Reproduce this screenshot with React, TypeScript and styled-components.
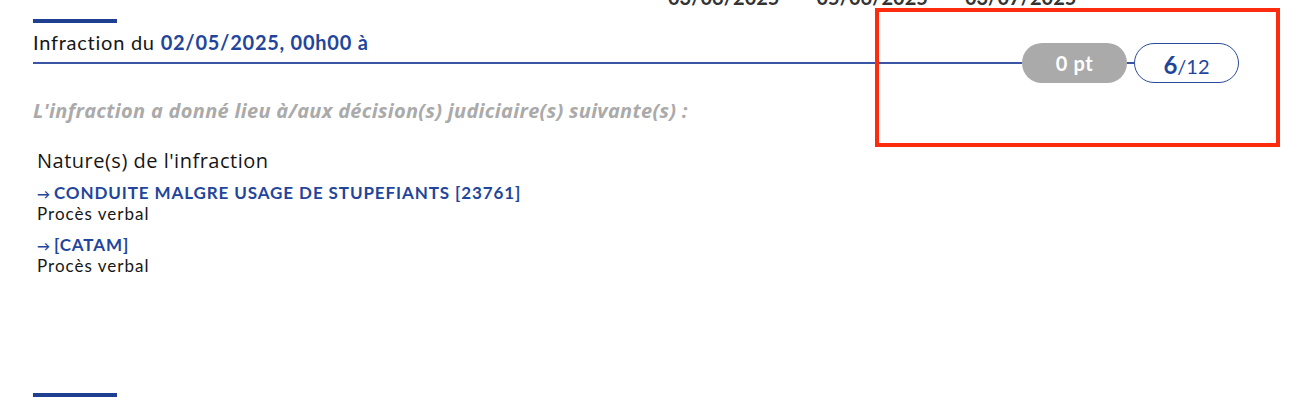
import React from "react";
import styled, { createGlobalStyle } from "styled-components";

const Global = createGlobalStyle`
  html, body { margin: 0; padding: 0; background: #ffffff; }
  body { font-family: Lato, "Noto Sans", sans-serif; color: #161616; }
  * { box-sizing: border-box; }
`;

const BLUE = "#1f469c";
const RULE = "#3a55a3";

const Page = styled.div`
  position: relative;
  width: 1310px;
  height: 400px;
  overflow: hidden;
  padding: 0 71px 0 33px;
`;

const DatesRow = styled.div`
  display: flex;
  gap: 37px;
  margin-top: -14px;
  padding-left: 635px;
  height: 22px;
  line-height: 22px;
  font-family: Lato, sans-serif;
  font-weight: 700;
  font-size: 20px;
  color: #333333;
`;

const Accent = styled.div<{ $top: number }>`
  width: 84px;
  height: 4px;
  background: #1f3f92;
  margin-top: ${(p) => p.$top}px;
`;

const Title = styled.h2`
  margin: 7px 0 0;
  font-family: Lato, sans-serif;
  font-weight: 400;
  font-size: 20px;
  letter-spacing: 0.75px;
  line-height: 24px;
  color: #161616;
`;

const TitleDate = styled.strong`
  color: ${BLUE};
  font-weight: 700;
`;

const RuleRow = styled.div`
  display: flex;
  align-items: center;
  margin-top: -11px;
  height: 40px;
`;

const Rule = styled.div`
  flex: 1;
  height: 2px;
  background: ${RULE};
`;

const Connector = styled.div`
  width: 7px;
  height: 2px;
  background: ${RULE};
`;

const PointsPill = styled.div`
  width: 105px;
  height: 40px;
  border-radius: 20px;
  background: #aaaaaa;
  color: #ffffff;
  display: flex;
  align-items: center;
  justify-content: center;
  font-weight: 700;
  font-size: 20px;
  letter-spacing: 0.6px;
`;

const BalancePill = styled.div`
  width: 105px;
  height: 40px;
  border-radius: 20px;
  border: 1.5px solid #2a4a9c;
  background: #ffffff;
  color: ${BLUE};
  display: flex;
  align-items: baseline;
  justify-content: center;
  padding-top: 6px;
  font-size: 20px;
`;

const BalanceValue = styled.span`
  font-weight: 700;
  font-size: 24px;
`;

const Notice = styled.p`
  margin: 16px 0 0;
  font-family: "Open Sans", sans-serif;
  font-style: italic;
  font-weight: 700;
  font-size: 20px;
  letter-spacing: 0.3px;
  line-height: 24px;
  color: #aaaaaa;
`;

const Nature = styled.h3`
  margin: 26px 0 0 4px;
  font-family: "Open Sans", sans-serif;
  font-weight: 400;
  font-size: 20px;
  letter-spacing: 0.5px;
  line-height: 24px;
  color: #161616;
`;

const List = styled.ul`
  list-style: none;
  margin: 10px 0 0 4px;
  padding: 0;
  display: flex;
  flex-direction: column;
  gap: 11px;
`;

const Item = styled.li`
  display: flex;
  flex-direction: column;
  font-size: 17px;
  line-height: 20px;
`;

const Offence = styled.span`
  color: ${BLUE};
  font-weight: 700;
  letter-spacing: 0.9px;
`;

const Arrow = styled.span`
  font-size: 13px;
  margin-right: 3px;
`;

const Kind = styled.span`
  color: #161616;
  letter-spacing: 1px;
`;

const Annotation = styled.div`
  position: absolute;
  left: 875px;
  top: 8px;
  width: 405px;
  height: 139px;
  border: 4px solid #fe2c0e;
  pointer-events: none;
`;

const offences = [
  { label: "CONDUITE MALGRE USAGE DE STUPEFIANTS [23761]", kind: "Procès verbal" },
  { label: "[CATAM]", kind: "Procès verbal" },
];

export default function App() {
  return (
    <>
      <Global />
      <Page>
        <DatesRow>
          <span>03/06/2025</span>
          <span>05/06/2025</span>
          <span>03/07/2025</span>
        </DatesRow>
        <Accent $top={11} />
        <Title>
          Infraction du <TitleDate>02/05/2025, 00h00 à</TitleDate>
        </Title>
        <RuleRow>
          <Rule />
          <PointsPill>0 pt</PointsPill>
          <Connector />
          <BalancePill>
            <BalanceValue>6</BalanceValue>/12
          </BalancePill>
        </RuleRow>
        <Notice>L'infraction a donné lieu à/aux décision(s) judiciaire(s) suivante(s) :</Notice>
        <Nature>Nature(s) de l'infraction</Nature>
        <List>
          {offences.map((o) => (
            <Item key={o.label}>
              <Offence>
                <Arrow>→</Arrow>
                {o.label}
              </Offence>
              <Kind>{o.kind}</Kind>
            </Item>
          ))}
        </List>
        <Accent $top={117} />
        <Annotation />
      </Page>
    </>
  );
}
